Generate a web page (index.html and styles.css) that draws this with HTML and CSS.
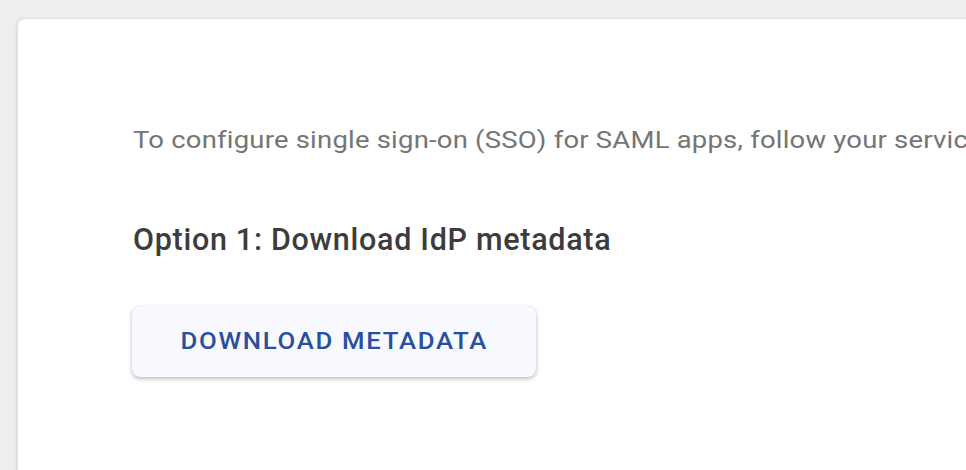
FILE: index.html
```html
<!DOCTYPE html>
<html>
<head>
<meta charset="utf-8">
<link rel="stylesheet" href="styles.css">
</head>
<body>
<div class="page">
  <div class="card">
    <p class="intro">To configure single sign-on (SSO) for SAML apps, follow your service provider's instructions.</p>
    <h2 class="option">Option 1: Download IdP metadata</h2>
    <button class="btn"><span class="btn-label">DOWNLOAD METADATA</span></button>
  </div>
</div>
</body>
</html>
```

FILE: styles.css
```css
html, body {
  margin: 0;
  padding: 0;
  background: #eeeeee;
  overflow: hidden;
}
.page {
  padding: 19px 0 0 18px;
  height: 470px;
  box-sizing: border-box;
  overflow: hidden;
}
.card {
  background: #ffffff;
  border-radius: 7px 0 0 0;
  box-shadow: 0 0 0 1px #e2e1e8, -1px 0 2px 1px #dcdbe3;
  height: 600px;
  width: 1100px;
  padding: 105px 0 0 115px;
  box-sizing: border-box;
  font-family: Roboto, "Noto Sans", sans-serif;
}
.intro {
  margin: 0;
  font-size: 24.5px;
  line-height: 32px;
  letter-spacing: 0.2px;
  color: #757575;
  white-space: nowrap;
  transform: scaleX(1.12);
  transform-origin: left center;
}
.option {
  margin: 64px 0 0 0;
  font-size: 30.5px;
  line-height: 40px;
  font-weight: 500;
  letter-spacing: 0.7px;
  color: #3c3c3c;
}
.btn {
  display: flex;
  align-items: center;
  justify-content: center;
  margin: 46px 0 0 -1px;
  width: 404px;
  height: 71px;
  border: none;
  border-radius: 8px;
  background: #f8f9fe;
  box-shadow: 0 2px 4px rgba(0,0,0,0.25), 0 0 1px rgba(0,0,0,0.15);
  padding: 0;
  cursor: pointer;
}
.btn-label {
  display: inline-block;
  font-family: Roboto, "Noto Sans", sans-serif;
  font-size: 23px;
  font-weight: 500;
  letter-spacing: 1.5px;
  margin-right: -1.5px;
  color: #2a4fa0;
  transform: scaleX(1.12);
  white-space: nowrap;
}
```
